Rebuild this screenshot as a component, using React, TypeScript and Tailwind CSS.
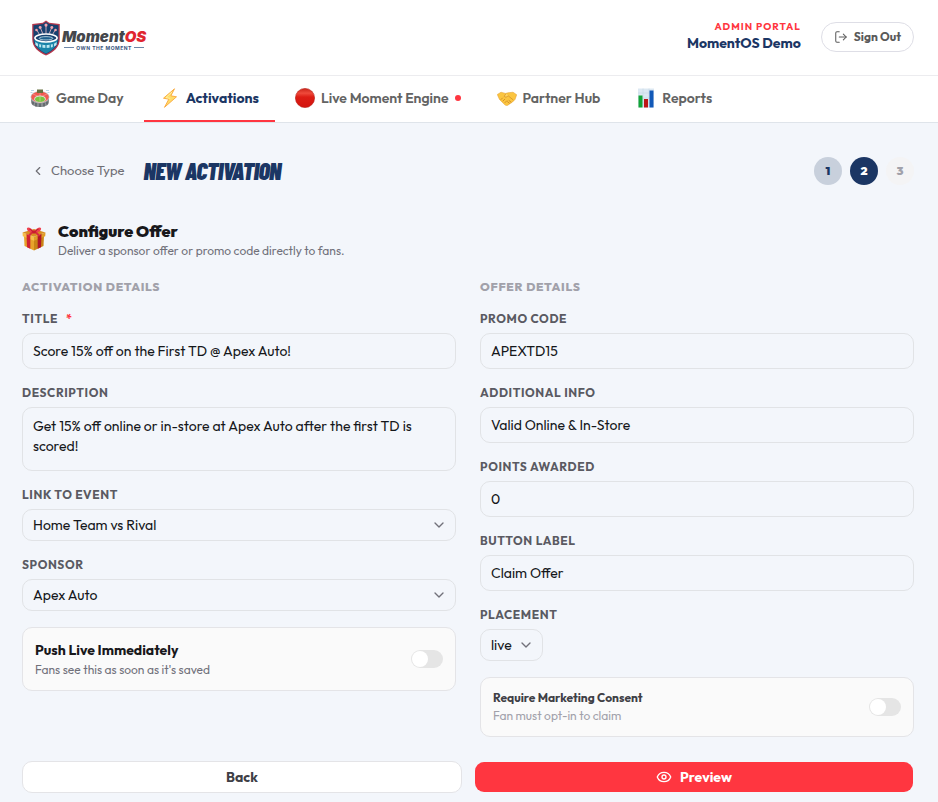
import type { ReactNode } from "react";
import { ChevronDown, ChevronLeft, Eye, LogOut } from "lucide-react";

function Shield() {
  return (
    <svg viewBox="0 0 28 34" className="h-9 w-[30px]" aria-hidden="true">
      <path d="M14 .5 17 2.6 27 3.8V18c0 8-6 12.500-13 15.500C7 30.500 1 26 1 18V3.800l10-1.200Z" fill="#b5394d" />
      <path d="M14 2 17 3.800 25.800 5v13c0 7-5.300 11.200-11.800 14C7.500 29.200 2.200 25 2.200 18V5L11 3.800Z" fill="#17416f" />
      <path d="M3 19h22c-.5 6-5 10-11 12.600C8 29 3.500 25 3 19Z" fill="#1a83a8" />
      <g stroke="#e8b9c4" strokeWidth=".8">
        <path d="M14 13V5M11 13 8.500 7M17 13l2.500-6M8 14l-3-5M20 14l3-5" />
      </g>
      <g fill="#f3a3ae">
        <circle cx="14" cy="4.800" r="1.500" />
        <circle cx="8.500" cy="7" r="1.400" />
        <circle cx="19.500" cy="7" r="1.400" />
        <circle cx="5" cy="9.500" r="1.200" />
        <circle cx="23" cy="9.500" r="1.200" />
      </g>
      <ellipse cx="14" cy="17" rx="10.500" ry="3.800" fill="#17416f" stroke="#fff" strokeWidth="1.500" />
      <ellipse cx="14" cy="17.300" rx="6.500" ry="1.600" fill="#1f5f8c" stroke="#d8f1f7" strokeWidth=".7" />
      <path d="M4 20.500c3 4 17 4 20 0v3.200c-4 3.800-16 3.800-20 0Z" fill="#bde8f1" />
      <path d="M7 22v4M10 23v4M14 23.500v4M18 23v4M21 22v4" stroke="#1a83a8" strokeWidth="1.200" />
    </svg>
  );
}

function Stadium() {
  return (
    <svg viewBox="0 0 20 20" className="size-5" aria-hidden="true">
      <path d="M1 8v6c0 3 4 5 9 5s9-2 9-5V8Z" fill="#8b8f92" />
      <path d="M3 13.500v3M6 15v3.500M10 15.500V19M14 15v3.500M17 13.500v3" stroke="#54595e" strokeWidth="1.300" />
      <ellipse cx="10" cy="9" rx="9.500" ry="6" fill="#c3c7ca" />
      <ellipse cx="10" cy="9" rx="8.800" ry="5.400" fill="#f05a50" />
      <path d="M10 3.600v10.800M3 6l14 6.500M17 6 3 12.500" stroke="#f7a49d" strokeWidth=".6" />
      <ellipse cx="10" cy="11" rx="5.800" ry="3.400" fill="#dfe4dc" />
      <ellipse cx="10" cy="11.200" rx="4.900" ry="2.700" fill="#7cc440" />
      <path d="M10 8.700v5" stroke="#c8ec9c" strokeWidth=".6" />
      <path d="M7 1.500h6v3.500H7Z" fill="#66703f" />
      <path d="M1 2.500h3M16 2.500h3M.5 4.500h2M17.500 4.500h2" stroke="#bad8e9" strokeWidth="1" />
    </svg>
  );
}

function Bolt() {
  return (
    <svg viewBox="0 0 20 20" className="size-5" aria-hidden="true">
      <path d="m14.500.8-11 9.400 5.300 1L4.500 19.300l12-10.500-5.600-1Z" fill="#ffdc68" stroke="#f9a63a" strokeWidth=".9" strokeLinejoin="round" />
      <path d="M12 4 6 9.600l4.200.8" fill="none" stroke="#fff2a5" strokeWidth=".9" />
    </svg>
  );
}

function RedCircle() {
  return (
    <svg viewBox="0 0 20 20" className="size-5" aria-hidden="true">
      <defs>
        <linearGradient id="ball" x1="0" y1="0" x2="0" y2="1">
          <stop offset="0" stopColor="#cb2418" />
          <stop offset=".25" stopColor="#ef4a3b" />
          <stop offset=".45" stopColor="#dd1d14" />
          <stop offset="1" stopColor="#d3130e" />
        </linearGradient>
      </defs>
      <circle cx="10" cy="10" r="9.600" fill="url(#ball)" stroke="#b51b14" strokeWidth=".6" />
    </svg>
  );
}

function Handshake() {
  return (
    <svg viewBox="0 0 20 20" className="size-5" aria-hidden="true">
      <path d="M.3 6.500 4 4.200l4.500 1.200 2.500-.6 5-.6 3.700 2.500-1.700 4.800-2.500 2.500-4.700 3.200c-.8.500-2 .3-2.700-.2L2.500 11.500Z" fill="#fbc540" stroke="#e29a2b" strokeWidth=".5" />
      <path d="M9 5.500 7.200 8.300c1 1.300 2.800.9 3.900-.6l5.200 4.300" fill="#fdd766" stroke="#d08a25" strokeWidth=".7" />
      <path d="m4 11.500 1.500-1.500M6 13l1.800-1.800M8 14.600l1.800-1.800M12 12.500l2 1.600M10.500 13.700l1.800 1.500" stroke="#c37a1c" strokeWidth=".7" strokeLinecap="round" />
    </svg>
  );
}

function BarChart() {
  return (
    <svg viewBox="0 0 20 20" className="size-5" aria-hidden="true">
      <path d="M2 .5h16v19H2Z" fill="#dce8f2" />
      <path d="M2 5h16M2 10h16M2 15h16M7 .5v19M13 .5v19" stroke="#c3d4e2" strokeWidth=".5" />
      <path d="M2.500 7.500h4v12h-4Z" fill="#12a437" />
      <path d="M8 11h4v8.500H8Z" fill="#bd1717" />
      <path d="M13.500 2.500h4v17h-4Z" fill="#1259b8" />
    </svg>
  );
}

function Gift() {
  return (
    <svg viewBox="0 0 24 24" className="size-6 shrink-0" aria-hidden="true">
      <path d="M2 8.500 12 12v11.500L2.500 19Z" fill="#e7a32a" />
      <path d="m22 8.500-10 3.500v11.500l9.500-4.500Z" fill="#c98516" />
      <path d="M.5 5.500 12 9.800v4L.8 9.200Z" fill="#f6bf4a" />
      <path d="M23.500 5.500 12 9.800v4l11.200-4.600Z" fill="#df9d28" />
      <path d="M.5 5.500 12 2l11.500 3.500L12 9.800Z" fill="#d98e22" />
      <path d="m4.500 7 3.800 1.400V21.700l-3.300-1.500Z" fill="#cf2232" />
      <path d="m19.500 7-3.800 1.400V21.700l3.300-1.500Z" fill="#b01728" />
      <path d="M12 5C9.500.5 5.500-.2 5 1.200c-.5 1.600 1 4.300 7 4.800 6-.5 7.500-3.200 7-4.800C18.500-.2 14.500.5 12 5Z" fill="#f0414e" />
      <path d="M7.500 2.200c1.500.3 3 1.500 3.500 2.800M16.500 2.200c-1.500.3-3 1.500-3.500 2.800" stroke="#a71529" strokeWidth=".9" fill="none" />
      <path d="m10.500 5-4 4M13.500 5l4 4" stroke="#d92c3d" strokeWidth="2" />
      <rect x="10.200" y="3.500" width="3.600" height="3" rx="1" fill="#c81d30" />
    </svg>
  );
}

const tabs: { label: string; icon: ReactNode; active?: boolean; live?: boolean }[] = [
  { label: "Game Day", icon: <Stadium /> },
  { label: "Activations", icon: <Bolt />, active: true },
  { label: "Live Moment Engine", icon: <RedCircle />, live: true },
  { label: "Partner Hub", icon: <Handshake /> },
  { label: "Reports", icon: <BarChart /> },
];

const boxClass = "rounded-[10px] border border-[#e1e3e6] bg-transparent px-2.5 text-sm text-[#15171a] outline-none";

function Field({ id, label, required, children }: { id: string; label: string; required?: boolean; children: ReactNode }) {
  return (
    <div className="flex flex-col items-start gap-1.5">
      <label htmlFor={id} className="flex gap-2 text-xs leading-4 font-bold tracking-wider text-[#5a5a62] uppercase">
        {label}
        {required && <span className="text-[#ff3640]">*</span>}
      </label>
      {children}
    </div>
  );
}

function TextField({ id, label, value, required }: { id: string; label: string; value: string; required?: boolean }) {
  return (
    <Field id={id} label={label} required={required}>
      <input id={id} type="text" defaultValue={value} className={`${boxClass} h-9 w-full`} />
    </Field>
  );
}

function SelectField({ id, label, value, compact }: { id: string; label: string; value: string; compact?: boolean }) {
  return (
    <Field id={id} label={label}>
      <div className={compact ? "relative w-[63px]" : "relative w-full"}>
        <select id={id} defaultValue={value} className={`${boxClass} block h-8 w-full appearance-none`}>
          <option>{value}</option>
        </select>
        <ChevronDown className="pointer-events-none absolute top-2 right-[9px] size-4 text-[#71717a]" />
      </div>
    </Field>
  );
}

function Toggle({ id }: { id: string }) {
  return (
    <input
      id={id}
      type="checkbox"
      role="switch"
      className="flex h-[18px] w-8 shrink-0 appearance-none items-center rounded-full bg-[#e5e5e5] px-px before:size-4 before:rounded-full before:bg-white checked:justify-end checked:bg-[#1b3664]"
    />
  );
}

export default function App() {
  return (
    <div className="min-h-screen bg-[#f3f6fb] font-[Outfit,Lato,sans-serif] text-[#18181b]">
      <header className="border-b border-[#ececef] bg-white">
        <div className="flex h-[75px] items-center justify-between pr-6 pl-[31px]">
          <a href="#" className="flex items-center gap-px">
            <Shield />
            <span className="flex flex-col items-center pt-1 font-[Inter,sans-serif]">
              <span className="text-[15px] leading-4 font-black text-[#44474c] italic">
                Moment<span className="text-[#e0252f]">OS</span>
              </span>
              <span className="flex items-center gap-0.5 text-[5px] leading-[6px] font-bold tracking-widest text-[#36547d]">
                <span className="h-px w-2.5 bg-[#6c86a8]" />
                OWN THE MOMENT
                <span className="h-px w-2.5 bg-[#6c86a8]" />
              </span>
            </span>
          </a>
          <div className="flex items-center gap-5 pb-0.5">
            <div className="flex flex-col items-end pb-0.5">
              <span className="text-[10px] leading-[14px] font-bold tracking-widest text-[#ff3640]">ADMIN PORTAL</span>
              <span className="text-sm leading-[18px] font-bold text-[#1b3664]">MomentOS Demo</span>
            </div>
            <button type="button" className="flex h-[30px] items-center gap-1.5 rounded-full border border-[#dedee6] px-3 text-xs font-bold text-[#5a5a5a]">
              <LogOut className="size-3.5" strokeWidth={1.75} />
              Sign Out
            </button>
          </div>
        </div>
      </header>

      <nav className="flex h-[47px] gap-1 border-b border-[#dfe4ea] bg-white px-3.5">
        {tabs.map((tab) => (
          <a
            key={tab.label}
            href="#"
            aria-current={tab.active ? "page" : undefined}
            className={`flex items-center gap-1.5 border-b-2 px-4 text-sm whitespace-nowrap ${tab.active ? "border-[#ff3640] font-bold text-[#1b3664]" : "border-transparent font-semibold text-[#636363]"}`}
          >
            {tab.icon}
            {tab.label}
            {tab.live && <span className="size-1.5 rounded-full bg-[#ff3640]" />}
          </a>
        ))}
      </nav>

      <main className="pt-[34px] pr-6 pb-2 pl-[22px]">
        <div className="flex h-7 items-center gap-[19px]">
          <button type="button" className="flex items-center gap-1.5 pl-[9px] text-[13px] text-[#6f6f75]">
            <ChevronLeft className="size-3.5" />
            Choose Type
          </button>
          <h1 className="font-['Barlow_Condensed','Liberation_Sans_Narrow','Liberation_Sans',sans-serif] text-2xl leading-7 font-black tracking-tight whitespace-nowrap text-[#1b3664] italic">
            NEW ACTIVATION
          </h1>
          <ol className="ml-auto flex gap-2 text-xs font-black">
            <li className="flex size-7 items-center justify-center rounded-full bg-[#c8d0dc] text-[#1b3664]">1</li>
            <li className="flex size-7 items-center justify-center rounded-full bg-[#1b3664] text-white">2</li>
            <li className="flex size-7 items-center justify-center rounded-full bg-[#f4f4f5] text-[#a1a1aa]">3</li>
          </ol>
        </div>

        <div className="mt-[34px] flex items-center gap-3">
          <Gift />
          <div>
            <h2 className="text-base leading-6 font-black">Configure Offer</h2>
            <p className="text-xs leading-4 text-[#71717a]">Deliver a sponsor offer or promo code directly to fans.</p>
          </div>
        </div>

        <form>
          <div className="mt-5 grid grid-cols-2 gap-6">
            <section className="flex flex-col gap-4">
              <h3 className="text-xs leading-4 font-extrabold tracking-[0.06em] text-[#a1a1aa]">ACTIVATION DETAILS</h3>
              <TextField id="title" label="Title" value="Score 15% off on the First TD @ Apex Auto!" required />
              <Field id="description" label="Description">
                <textarea
                  id="description"
                  defaultValue="Get 15% off online or in-store at Apex Auto after the first TD is scored!"
                  className={`${boxClass} block h-16 w-full resize-none py-2 leading-5`}
                />
              </Field>
              <SelectField id="event" label="Link to Event" value="Home Team vs Rival" />
              <SelectField id="sponsor" label="Sponsor" value="Apex Auto" />
              <div className="flex h-16 items-center justify-between rounded-[10px] border border-[#e4e4e7] bg-[#fafafa] px-3">
                <label htmlFor="push" className="pt-0.5">
                  <span className="block text-sm leading-5 font-bold">Push Live Immediately</span>
                  <span className="block text-xs leading-5 text-[#71717a]">Fans see this as soon as it's saved</span>
                </label>
                <Toggle id="push" />
              </div>
            </section>

            <section className="flex flex-col gap-4">
              <h3 className="text-xs leading-4 font-extrabold tracking-[0.06em] text-[#a1a1aa]">OFFER DETAILS</h3>
              <TextField id="promo" label="Promo Code" value="APEXTD15" />
              <TextField id="info" label="Additional Info" value="Valid Online &amp; In-Store" />
              <TextField id="points" label="Points Awarded" value="0" />
              <TextField id="button-label" label="Button Label" value="Claim Offer" />
              <SelectField id="placement" label="Placement" value="live" compact />
              <div className="flex h-[60px] items-center justify-between rounded-[10px] border border-[#e4e4e7] bg-[#fafafa] px-3">
                <label htmlFor="consent">
                  <span className="block text-xs leading-[18px] font-bold text-[#3f3f46]">Require Marketing Consent</span>
                  <span className="block text-xs leading-[18px] text-[#a1a1aa]">Fan must opt-in to claim</span>
                </label>
                <Toggle id="consent" />
              </div>
            </section>
          </div>

          <div className="mt-6 grid grid-cols-2 gap-3">
            <button type="button" className="h-8 rounded-[10px] border border-[#e4e4e7] bg-white text-sm font-bold text-[#3f3f46]">
              Back
            </button>
            <button type="button" className="flex h-8 items-center justify-center gap-2 rounded-[10px] border border-transparent bg-[#ff3640] bg-clip-padding text-sm font-bold text-white">
              <Eye className="size-4" />
              Preview
            </button>
          </div>
        </form>
      </main>
    </div>
  );
}
